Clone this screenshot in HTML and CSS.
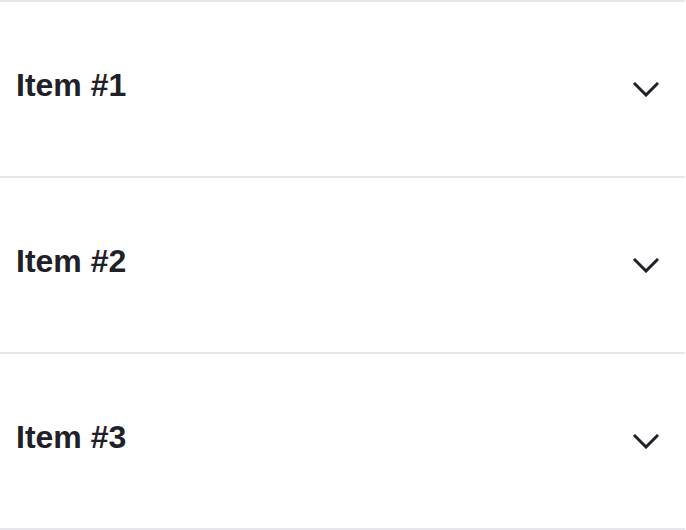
FILE: index.html
```html
<!DOCTYPE html>
<html lang="en">
<head>
<meta charset="utf-8">
<title>Accordion</title>
<link rel="stylesheet" href="styles.css">
</head>
<body>
<div class="accordion">
  <div class="item">
    <h2 class="title">Item #1</h2>
    <svg class="chevron" viewBox="0 0 26 15" width="26" height="15"><polyline points="2,2 13,13 24,2"/></svg>
  </div>
  <div class="item">
    <h2 class="title">Item #2</h2>
    <svg class="chevron" viewBox="0 0 26 15" width="26" height="15"><polyline points="2,2 13,13 24,2"/></svg>
  </div>
  <div class="item">
    <h2 class="title">Item #3</h2>
    <svg class="chevron" viewBox="0 0 26 15" width="26" height="15"><polyline points="2,2 13,13 24,2"/></svg>
  </div>
</div>
</body>
</html>
```
FILE: styles.css
```css
html, body {
  margin: 0;
  padding: 0;
  background: #ffffff;
}
body {
  font-family: "Liberation Sans", Arial, sans-serif;
  color: #1f2126;
}
.accordion {
  width: 685px;
  border-bottom: 2px solid #e6e6ec;
}
.item {
  height: 174px;
  border-top: 2px solid #e6e6ec;
  display: flex;
  align-items: center;
  justify-content: space-between;
  padding: 0 26px 0 16px;
}
.title {
  margin: 0 0 9px 0;
  font-size: 32px;
  font-weight: 700;
  line-height: 36px;
}
.chevron {
  fill: none;
  stroke: #1f2126;
  stroke-width: 3;
  stroke-linecap: square;
  stroke-linejoin: miter;
}
```
